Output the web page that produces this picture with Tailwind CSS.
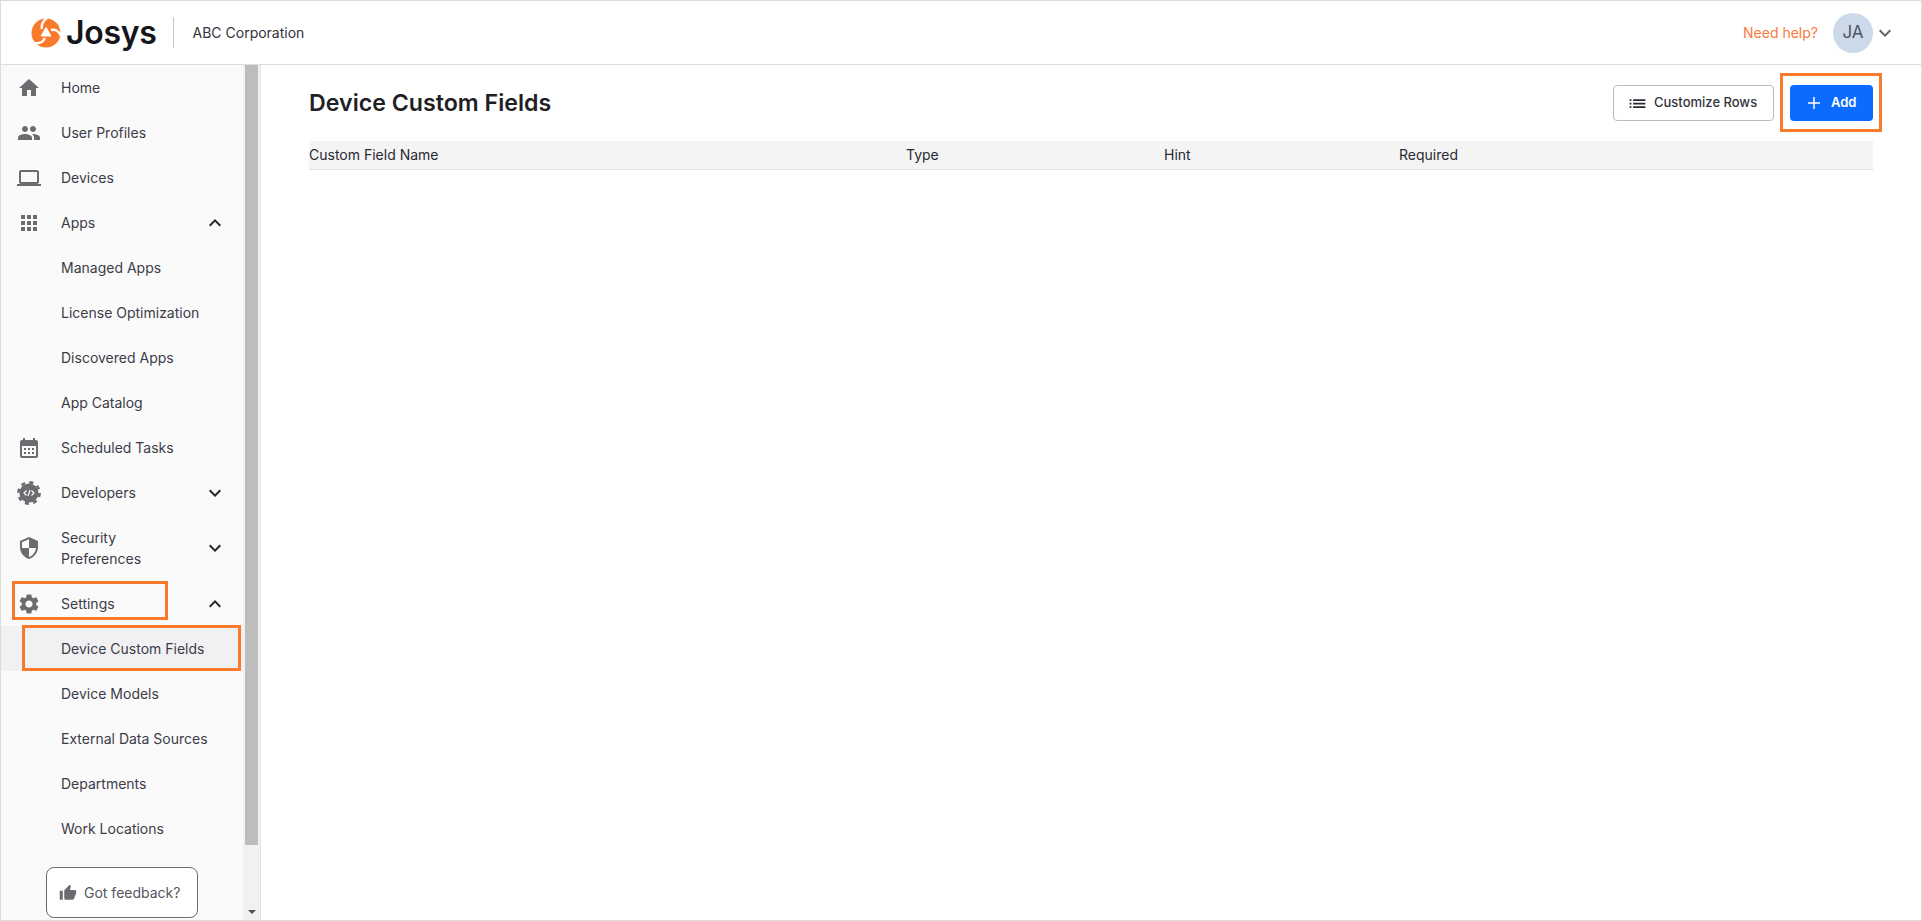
<!DOCTYPE html>
<html lang="en">
<head>
  <meta charset="UTF-8" />
  <title>Device Custom Fields</title>
  <script src="https://cdn.jsdelivr.net/npm/@tailwindcss/browser@4"></script>
</head>
<body class="[font-family:Inter,sans-serif] bg-white overflow-hidden">
<div class="relative flex flex-col h-screen w-screen border border-[#dcdcdc] text-[14px] text-[#3c3c48]">

  <!-- Header -->
  <header class="flex items-center justify-between h-[64px] shrink-0 border-b border-[#dcdcdc] pr-[24px] bg-white">
    <div class="flex items-center">
      <svg class="ml-[30px] w-[30px] h-[30px]" viewBox="0 0 30 30">
        <circle cx="15" cy="15" r="14.5" fill="#f97a2b"/>
        <path d="M15 10 19.5 17.8 10.5 17.8z" fill="#fff" stroke="#fff" stroke-width="1.5" stroke-linejoin="round"/>
        <path d="M11 11 C 10 7, 12 3, 16 0" stroke="#fff" stroke-width="2.4" fill="none"/>
        <path d="M20 12 C 24 11, 28 13, 30 18" stroke="#fff" stroke-width="2.4" fill="none"/>
        <path d="M14 20 C 12 24, 8 26, 3 25" stroke="#fff" stroke-width="2.4" fill="none"/>
      </svg>
      <span class="ml-[5px] text-[32px] leading-none font-semibold text-[#15151a] tracking-[-0.3px]">Josys</span>
      <div class="w-px h-[31px] bg-[#c4c4c4] ml-[16px]"></div>
      <span class="ml-[19px] text-[#33333f]">ABC Corporation</span>
    </div>
    <div class="flex items-center">
      <span class="text-[#f9793a]">Need help?</span>
      <div class="ml-[15px] w-[40px] h-[40px] rounded-full bg-[#ccd9e8] flex items-center justify-center text-[17px] text-[#4a5664]">JA</div>
      <svg class="w-[24px] h-[24px] fill-[#666]" viewBox="0 0 24 24"><path d="M16.59 8.59 12 13.17 7.41 8.59 6 10l6 6 6-6z"/></svg>
    </div>
  </header>

  <div class="flex flex-1 min-h-0">
    <!-- Sidebar -->
    <aside class="flex w-[260px] shrink-0 border-r border-[#e2e2e2] bg-[#fafafa]">
      <nav class="w-[242px] shrink-0">
        <a class="flex items-center h-[45px] pl-[16px]"><svg class="w-[24px] h-[24px] fill-[#6b6b70]" viewBox="0 0 24 24"><path d="M10 20v-6h4v6h5v-8h3L12 3 2 12h3v8z"/></svg><span class="ml-[20px]">Home</span></a>
        <a class="flex items-center h-[45px] pl-[16px]"><svg class="w-[24px] h-[24px] fill-[#6b6b70]" viewBox="0 0 24 24"><path d="M16 11c1.66 0 2.99-1.34 2.99-3S17.66 5 16 5c-1.66 0-3 1.34-3 3s1.34 3 3 3zm-8 0c1.66 0 2.99-1.34 2.99-3S9.66 5 8 5C6.34 5 5 6.34 5 8s1.34 3 3 3zm0 2c-2.33 0-7 1.17-7 3.5V19h14v-2.5c0-2.33-4.67-3.5-7-3.5zm8 0c-.29 0-.62.02-.97.05 1.16.84 1.97 1.97 1.97 3.45V19h6v-2.5c0-2.33-4.67-3.5-7-3.5z"/></svg><span class="ml-[20px]">User Profiles</span></a>
        <a class="flex items-center h-[45px] pl-[16px]"><svg class="w-[24px] h-[24px] fill-[#6b6b70]" viewBox="0 0 24 24"><path d="M20 18c1.1 0 1.99-.9 1.99-2L22 6c0-1.1-.9-2-2-2H4c-1.1 0-2 .9-2 2v10c0 1.1.9 2 2 2H0v2h24v-2h-4zM4 6h16v10H4V6z"/></svg><span class="ml-[20px]">Devices</span></a>
        <a class="flex items-center h-[45px] pl-[16px] pr-[16px]"><svg class="w-[24px] h-[24px] fill-[#6b6b70]" viewBox="0 0 24 24"><path d="M4 8h4V4H4v4zm6 12h4v-4h-4v4zm-6 0h4v-4H4v4zm0-6h4v-4H4v4zm6 0h4v-4h-4v4zm6-10v4h4V4h-4zm-6 4h4V4h-4v4zm6 6h4v-4h-4v4zm0 6h4v-4h-4v4z"/></svg><span class="ml-[20px] flex-1">Apps</span><svg class="w-[24px] h-[24px] fill-[#26262b]" viewBox="0 0 24 24"><path d="M12 8l-6 6 1.41 1.41L12 10.83l4.59 4.58L18 14z"/></svg></a>
        <a class="flex items-center h-[45px] pl-[60px]">Managed Apps</a>
        <a class="flex items-center h-[45px] pl-[60px]">License Optimization</a>
        <a class="flex items-center h-[45px] pl-[60px]">Discovered Apps</a>
        <a class="flex items-center h-[45px] pl-[60px]">App Catalog</a>
        <a class="flex items-center h-[45px] pl-[16px]"><svg class="w-[24px] h-[24px] fill-[#6b6b70]" viewBox="0 0 24 24"><path d="M19 4h-1V2h-2v2H8V2H6v2H5c-1.11 0-1.99.9-1.99 2L3 20a2 2 0 0 0 2 2h14c1.1 0 2-.9 2-2V6c0-1.1-.9-2-2-2zm0 16H5V10h14v10zM9 14H7v-2h2v2zm4 0h-2v-2h2v2zm4 0h-2v-2h2v2zm-8 4H7v-2h2v2zm4 0h-2v-2h2v2zm4 0h-2v-2h2v2z"/></svg><span class="ml-[20px]">Scheduled Tasks</span></a>
        <a class="flex items-center h-[45px] pl-[16px] pr-[16px]"><svg class="w-[24px] h-[24px]" viewBox="0 0 24 24"><circle cx="12" cy="12" r="9.6" fill="#6b6b70"/><circle cx="12" cy="12" r="10.6" fill="none" stroke="#6b6b70" stroke-width="2.6" stroke-dasharray="4 4.33"/><path d="M9.5 9.5 7 12l2.5 2.5M14.5 9.5 17 12l-2.5 2.5M13 9l-2 6" fill="none" stroke="#fff" stroke-width="1.2"/></svg><span class="ml-[20px] flex-1">Developers</span><svg class="w-[24px] h-[24px] fill-[#26262b]" viewBox="0 0 24 24"><path d="M16.59 8.59 12 13.17 7.41 8.59 6 10l6 6 6-6z"/></svg></a>
        <a class="flex items-center h-[66px] pl-[16px] pr-[16px]"><svg class="w-[24px] h-[24px] fill-[#6b6b70]" viewBox="0 0 24 24"><path d="M12 1L3 5v6c0 5.55 3.84 10.74 9 12 5.16-1.26 9-6.45 9-12V5l-9-4zm0 10.99h7c-.53 4.12-3.28 7.79-7 8.94V12H5V6.3l7-3.11v8.8z"/></svg><span class="ml-[20px] flex-1 leading-[21px]">Security<br>Preferences</span><svg class="w-[24px] h-[24px] fill-[#26262b]" viewBox="0 0 24 24"><path d="M16.59 8.59 12 13.17 7.41 8.59 6 10l6 6 6-6z"/></svg></a>
        <a class="flex items-center h-[45px] pl-[16px] pr-[16px]"><svg class="w-[24px] h-[24px] fill-[#6b6b70]" viewBox="0 0 24 24"><path d="M19.14 12.94c.04-.3.06-.61.06-.94 0-.32-.02-.64-.07-.94l2.03-1.58a.49.49 0 0 0 .12-.61l-1.92-3.32a.488.488 0 0 0-.59-.22l-2.39.96c-.5-.38-1.03-.7-1.62-.94l-.36-2.54a.484.484 0 0 0-.48-.41h-3.84c-.24 0-.43.17-.47.41l-.36 2.54c-.59.24-1.13.57-1.62.94l-2.39-.96c-.22-.08-.47 0-.59.22L2.74 8.87c-.12.21-.08.47.12.61l2.03 1.58c-.05.3-.09.63-.09.94s.02.64.07.94l-2.03 1.58a.49.49 0 0 0-.12.61l1.92 3.32c.12.22.37.29.59.22l2.39-.96c.5.38 1.03.7 1.62.94l.36 2.54c.05.24.24.41.48.41h3.84c.24 0 .44-.17.47-.41l.36-2.54c.59-.24 1.13-.56 1.62-.94l2.39.96c.22.08.47 0 .59-.22l1.92-3.32c.12-.22.07-.47-.12-.61l-2.01-1.58zM12 15.6c-1.98 0-3.6-1.62-3.6-3.6s1.62-3.6 3.6-3.6 3.6 1.62 3.6 3.6-1.62 3.6-3.6 3.6z"/></svg><span class="ml-[20px] flex-1">Settings</span><svg class="w-[24px] h-[24px] fill-[#26262b]" viewBox="0 0 24 24"><path d="M12 8l-6 6 1.41 1.41L12 10.83l4.59 4.58L18 14z"/></svg></a>
        <a class="flex items-center h-[45px] pl-[60px] bg-[#f1f1f3]">Device Custom Fields</a>
        <a class="flex items-center h-[45px] pl-[60px]">Device Models</a>
        <a class="flex items-center h-[45px] pl-[60px]">External Data Sources</a>
        <a class="flex items-center h-[45px] pl-[60px]">Departments</a>
        <a class="flex items-center h-[45px] pl-[60px]">Work Locations</a>
        <button class="flex items-center mt-[16px] ml-[45px] w-[152px] h-[51px] pl-[12px] border border-[#6b6b70] rounded-[8px] bg-white text-[#55555f]">
          <svg class="w-[18px] h-[18px] fill-[#6b6b70]" viewBox="0 0 24 24"><path d="M1 21h4V9H1v12zm22-11c0-1.1-.9-2-2-2h-6.31l.95-4.57.03-.32c0-.41-.17-.79-.44-1.06L14.17 1 7.59 7.59C7.22 7.95 7 8.45 7 9v10c0 1.1.9 2 2 2h9c.83 0 1.54-.5 1.84-1.22l3.02-7.05c.09-.23.14-.47.14-.73v-2z"/></svg>
          <span class="ml-[7px]">Got feedback?</span>
        </button>
      </nav>
      <!-- Scrollbar -->
      <div class="flex flex-col justify-between w-[17px] bg-[#f1f1f1]">
        <div class="mx-[2px] h-[780px] bg-[#bdbdbd]"></div>
        <div class="mx-auto mb-[6px] w-0 h-0 border-x-[4px] border-x-transparent border-t-[4px] border-t-[#505050]"></div>
      </div>
    </aside>

    <!-- Main -->
    <main class="flex-1 px-[48px]">
      <div class="flex items-center justify-between h-[76px]">
        <h1 class="text-[23.2px] font-semibold text-[#1f1f24]">Device Custom Fields</h1>
        <div class="flex items-center gap-[16px]">
          <button class="flex items-center w-[161px] h-[36px] pl-[13px] border border-[#bdbdbd] rounded-[4px] text-[13px] font-medium text-[#33333c]">
            <svg class="w-[21px] h-[21px] fill-[#2a2a33]" viewBox="0 0 24 24"><path d="M3 13h2v-2H3v2zm0 4h2v-2H3v2zm0-8h2V7H3v2zm4 4h14v-2H7v2zm0 4h14v-2H7v2zM7 7v2h14V7H7z"/></svg>
            <span class="ml-[6px]">Customize Rows</span>
          </button>
          <button class="flex items-center w-[83px] h-[36px] pl-[17px] rounded-[4px] bg-[#0b6bff] text-[13px] font-semibold text-white">
            <svg class="w-[14px] h-[14px]" viewBox="0 0 14 14"><path d="M7 1v12M1 7h12" stroke="#fff" stroke-width="1.5"/></svg>
            <span class="ml-[10px]">Add</span>
          </button>
        </div>
      </div>
      <div class="grid grid-cols-[597px_258px_235px_1fr] items-center h-[29px] pb-[2px] bg-[#f4f4f4] border-b border-[#e0e0e0] text-[#2a2a33]">
        <div>Custom Field Name</div>
        <div>Type</div>
        <div>Hint</div>
        <div>Required</div>
      </div>
    </main>
  </div>

  <!-- Orange annotation boxes -->
  <div class="absolute left-[11px] top-[580px] w-[156px] h-[39px] border-[3px] border-[#f97a2b]"></div>
  <div class="absolute left-[21px] top-[624px] w-[219px] h-[46px] border-[3px] border-[#f97a2b]"></div>
  <div class="absolute left-[1779px] top-[72px] w-[102px] h-[59px] border-[3px] border-[#f97a2b]"></div>
</div>
</body>
</html>
